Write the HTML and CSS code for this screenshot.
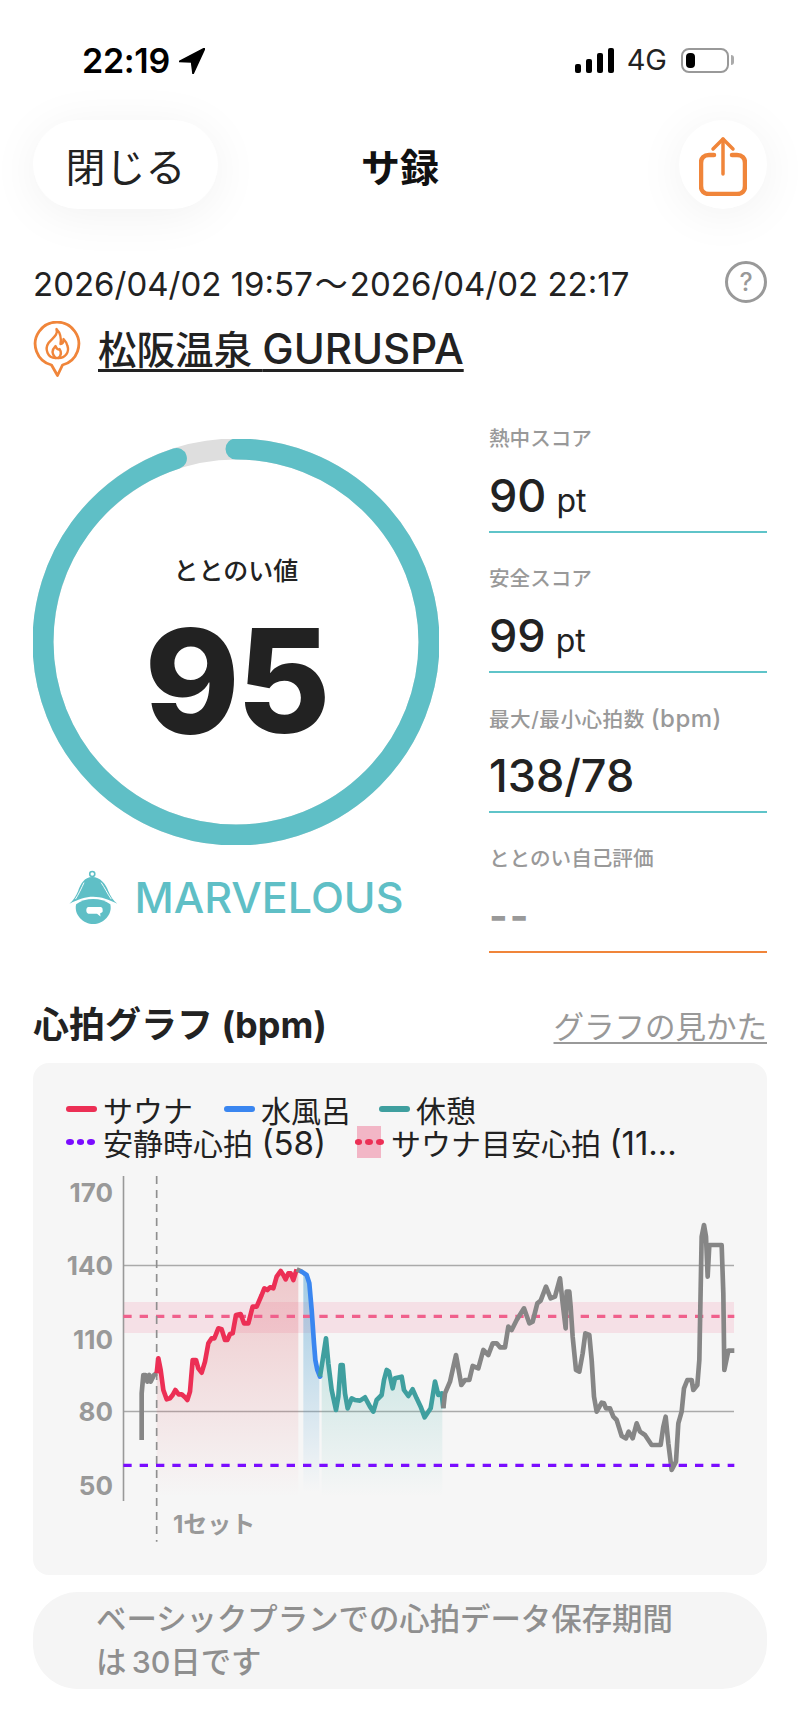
FILE: index.html
```html
<!DOCTYPE html>
<html lang="ja">
<head>
<meta charset="utf-8">
<title>サ録</title>
<link rel="stylesheet" href="styles.css">
</head>
<body>
<div class="status">
  <div class="status-left">
    <span class="clock">22:19</span>
    <svg class="loc" viewBox="0 0 26 26"><path d="M26 0 L0 13.5 L12.5 14 L14 26 Z" fill="#000" stroke="#000" stroke-width="1.5" stroke-linejoin="round"/></svg>
  </div>
  <div class="status-right">
    <div class="signal"><i class="b1"></i><i class="b2"></i><i class="b3"></i><i class="b4"></i></div>
    <span class="net">4G</span>
    <div class="battery"><i></i></div>
    <div class="nub"></div>
  </div>
</div>

<header class="nav">
  <button class="close">閉じる</button>
  <h1 class="title">サ録</h1>
  <button class="share">
    <svg viewBox="0 0 48 62" width="48" height="62" fill="none" stroke="#f0853a" stroke-width="3.5" stroke-linecap="round" stroke-linejoin="round">
      <path d="M15 21 H10 C5 21 2 24 2 29 V52 C2 57 5 60 10 60 H38 C43 60 46 57 46 52 V29 C46 24 43 21 38 21 H33" stroke-width="4.5"/>
      <path d="M24 5 V40"/>
      <path d="M14 15 L24 5 L34 15"/>
    </svg>
  </button>
</header>

<div class="date-row">
  <span class="date">2026/04/02 19:57<span class="wave">～</span>2026/04/02 22:17</span>
  <span class="help">?</span>
</div>

<div class="store-row">
  <svg class="pin" viewBox="0 0 47 56" fill="none" stroke="#f0853a" stroke-width="2.8" stroke-linejoin="round" stroke-linecap="round">
    <path d="M18 44 A21.8 21.8 0 1 1 29 44 L24 54.5 Z"/>
    <path d="M23 8 C25 14 19 17 15 22 C11 28 14 37 22 37 H25 C32 37 36 31 34 25 C33 21 31 19 30 18 C30 21 29 23 27 23 C28 17 27 12 23 8Z" stroke-width="2.4"/>
    <path d="M22 37 C18 33 18 29 22 25 C23 28 25 29 26 28 C28 31 28 34 25 37" stroke-width="2.4"/>
  </svg>
  <span class="store">松阪温泉 <span class="store-latin">GURUSPA</span></span>
</div>

<section class="summary">
  <div class="score">
    <div class="ring">
      <svg viewBox="0 0 406 406" width="406" height="406" class="ring-svg">
        <circle cx="203" cy="203" r="193" fill="none" stroke="#dedede" stroke-width="21"/>
        <circle cx="203" cy="203" r="193" fill="none" stroke="#5fbfc6" stroke-width="21" stroke-linecap="round" pathLength="100" stroke-dasharray="95 100" transform="rotate(-90 203 203)"/>
      </svg>
      <div class="ring-text">
        <div class="ring-label">ととのい値</div>
        <div class="ring-value">95</div>
      </div>
    </div>
    <div class="rank">
      <svg class="hat" viewBox="55 25 155 180">
        <circle cx="127" cy="41" r="8" fill="none" stroke="#5fbfc6" stroke-width="5"/>
        <path d="M127 50 C102 50 90 72 82 95 C76 110 66 125 55 135 C85 120 105 113 130 113 C155 113 180 122 206 135 C194 125 184 110 178 95 C170 72 152 50 127 50Z" fill="#5fbfc6"/>
        <path d="M76 136 C90 126 110 120 130 120 C150 120 170 126 184 136 C192 170 160 199 130 199 C100 199 68 170 76 136Z" fill="#5fbfc6"/>
        <path d="M101 68 C93 85 84 105 74 120 M155 68 C167 85 174 102 187 120" fill="none" stroke="#fff" stroke-width="3"/>
        <path d="M115 145 H152 C160 145 160 152 160 158 C160 163 155 164 152 165 L153 175 L142 166 H115 C106 166 106 145 115 145Z" fill="#fff"/>
      </svg>
      <span class="rank-name">MARVELOUS</span>
    </div>
  </div>
  <div class="stats">
    <div class="stat"><div class="stat-label">熱中スコア</div><div class="stat-value">90<small>pt</small></div></div>
    <div class="stat"><div class="stat-label">安全スコア</div><div class="stat-value">99<small>pt</small></div></div>
    <div class="stat"><div class="stat-label stat-label-wide">最大/最小心拍数 <span class="stat-unit">(bpm)</span></div><div class="stat-value">138/78</div></div>
    <div class="stat stat-empty"><div class="stat-label">ととのい自己評価</div><div class="stat-value">--</div></div>
  </div>
</section>

<div class="section-head">
  <h2 class="section-title">心拍グラフ (bpm)</h2>
  <span class="section-link">グラフの見かた</span>
</div>

<section class="card">
  <div class="legend">
    <div class="legend-row">
      <span class="item"><i class="swatch red"></i><span>サウナ</span></span>
      <span class="item item-tight"><i class="swatch blue"></i><span>水風呂</span></span>
      <span class="item"><i class="swatch teal"></i><span>休憩</span></span>
    </div>
    <div class="legend-row">
      <span class="item"><i class="dots purple"><b></b><b></b><b></b></i><span>安静時心拍 <span class="legend-latin">(58)</span></span></span>
      <span class="item"><i class="band"><i class="dots pink"><b></b><b></b><b></b></i></i><span>サウナ目安心拍 <span class="legend-latin">(11...</span></span></span>
    </div>
  </div>
  <svg class="chart" viewBox="33 1170 734 380" width="734" height="380">
    <defs>
      <linearGradient id="fr" x1="0" y1="0" x2="0" y2="1"><stop offset="0" stop-color="#dc5a64" stop-opacity=".3"/><stop offset="1" stop-color="#dc5a64" stop-opacity="0"/></linearGradient>
      <linearGradient id="fb" x1="0" y1="0" x2="0" y2="1"><stop offset="0" stop-color="#4d9fd0" stop-opacity=".5"/><stop offset="1" stop-color="#4d9fd0" stop-opacity="0"/></linearGradient>
      <linearGradient id="ft" x1="0" y1="0" x2="0" y2="1"><stop offset="0" stop-color="#4fb5ad" stop-opacity=".28"/><stop offset="1" stop-color="#4fb5ad" stop-opacity="0"/></linearGradient>
    </defs>
    <rect x="124" y="1302" width="610" height="31" fill="#ef5f8a" fill-opacity=".14"/>
    <path d="M124 1265.5 H734 M124 1411.5 H734" stroke="#aaa" stroke-width="1.6"/>
    <path d="M123.5 1176 V1501" stroke="#999" stroke-width="1.6"/>
    <g class="axis">
      <text x="113" y="1202">170</text>
      <text x="113" y="1275">140</text>
      <text x="113" y="1349">110</text>
      <text x="113" y="1421">80</text>
      <text x="113" y="1495">50</text>
    </g>
    <g transform="translate(30 1060) scale(.33333)" fill="none" stroke-linejoin="round">
      <path d="M380 940 L385 895 L392 930 L400 990 L410 1018 L420 1015 L428 1005 L436 990 L446 1003 L455 1003 L465 1012 L472 1020 L480 995 L488 900 L498 900 L505 925 L515 938 L525 905 L535 850 L545 835 L553 835 L565 805 L575 808 L585 840 L592 840 L600 822 L608 820 L618 765 L632 762 L642 790 L655 790 L668 740 L680 740 L695 705 L703 685 L712 690 L720 682 L730 685 L740 650 L752 633 L760 645 L767 658 L775 640 L782 640 L790 660 L800 628 L805 630 V1310 H380Z" fill="url(#fr)"/>
      <path d="M820 640 L830 645 L838 670 L845 750 L852 850 L856 900 L862 930 L868 950 V1295 H820Z" fill="url(#fb)"/>
      <path d="M875 925 L888 835 L895 910 L905 990 L918 1050 L925 1010 L932 915 L938 915 L945 1000 L953 1045 L965 1015 L975 1020 L990 1022 L1005 1012 L1020 1040 L1030 1055 L1040 1020 L1055 1005 L1062 960 L1070 930 L1077 935 L1088 985 L1095 955 L1115 950 L1122 990 L1135 1008 L1148 988 L1160 1015 L1172 1040 L1184 1072 L1202 1045 L1215 965 L1225 1005 L1237 1000 V1310 H875Z" fill="url(#ft)"/>

      <path d="M280 769 H2113" stroke="#f0608c" stroke-width="10" stroke-dasharray="25 24"/>
      <path d="M380 348 V1445" stroke="#8f8f8f" stroke-width="5" stroke-dasharray="24 18"/>

      <path d="M335 1140 L335 1000 L340 945 L347 945 L352 965 L358 945 L362 965 L372 945 L380 940" stroke="#868686" stroke-width="14"/>
      <path d="M380 940 L385 895 L392 930 L400 990 L410 1018 L420 1015 L428 1005 L436 990 L446 1003 L455 1003 L465 1012 L472 1020 L480 995 L488 900 L498 900 L505 925 L515 938 L525 905 L535 850 L545 835 L553 835 L565 805 L575 808 L585 840 L592 840 L600 822 L608 820 L618 765 L632 762 L642 790 L655 790 L668 740 L680 740 L695 705 L703 685 L712 690 L720 682 L730 685 L740 650 L752 633 L760 645 L767 658 L775 640 L782 640 L790 660 L800 628" stroke="#ec2f55" stroke-width="14"/>
      <path d="M800 628 L815 635" stroke="#868686" stroke-width="14"/>
      <path d="M815 635 L830 645 L838 670 L845 750 L852 850 L856 900 L862 930 L870 950" stroke="#3a86f0" stroke-width="14" stroke-linecap="round"/>
      <path d="M870 950 L878 900 L888 835 L895 910 L905 990 L918 1050 L925 1010 L932 915 L938 915 L945 1000 L953 1045 L965 1015 L975 1020 L990 1022 L1005 1012 L1020 1040 L1030 1055 L1040 1020 L1055 1005 L1062 960 L1070 930 L1077 935 L1088 985 L1095 955 L1115 950 L1122 990 L1135 1008 L1148 988 L1160 1015 L1172 1040 L1184 1072 L1202 1045 L1215 965 L1225 1005 L1235 1000 L1240 1045" stroke="#3f9f9f" stroke-width="14"/>
      <g transform="translate(1110 0)">
        <path d="M130 1045 L135 1000 L150 965 L168 885 L184 975 L195 960 L208 960 L218 918 L235 925 L250 870 L265 885 L278 850 L290 850 L300 862 L315 862 L325 800 L335 810 L350 780 L372 745 L388 790 L398 785 L412 730 L422 722 L438 680 L452 715 L465 710 L480 655 L488 730 L497 805 L500 695 L508 695 L512 740 L518 830 L528 930 L538 935 L548 880 L556 820 L568 825 L575 900 L582 1010 L590 1055 L605 1028 L612 1030 L618 1045 L630 1045 L640 1070 L650 1080 L665 1128 L678 1135 L686 1115 L698 1135 L710 1090 L720 1115 L735 1125 L755 1155 L770 1155 L782 1155 L790 1100 L797 1070 L805 1150 L815 1230 L828 1205 L835 1090 L845 1055 L852 985 L862 960 L875 960 L880 990 L892 975 L898 900 L905 530 L912 495 L918 530 L923 650 L928 555 L965 555 L970 700 L973 930 L985 872 L1003 872" stroke="#868686" stroke-width="14"/>
      </g>
      <path d="M280 1216 H2113" stroke="#7a0cff" stroke-width="10" stroke-dasharray="25 24"/>
    </g>
    <text class="set" x="173" y="1533">1セット</text>
  </svg>
</section>

<div class="note">ベーシックプランでの心拍データ保存期間は&#8201;30日です</div>
</body>
</html>
```
FILE: styles.css
```css
* { box-sizing: border-box; }
html, body { margin: 0; padding: 0; }
body {
  width: 800px;
  height: 1734px;
  background: #fff;
  color: #222;
  font-family: Inter, "Noto Sans CJK JP", sans-serif;
  overflow: hidden;
}
.status {
  height: 120px;
  padding: 47px 66px 0 82px;
  display: flex;
  justify-content: space-between;
  align-items: flex-start;
}
.status-left { display: flex; align-items: center; height: 27px; gap: 9px; }
.clock { font-size: 34px; font-weight: 600; color: #000; letter-spacing: -.3px; line-height: 27px; }
.loc { width: 26px; height: 26px; }
.status-right { display: flex; align-items: center; height: 26px; }
.signal { display: flex; align-items: flex-end; gap: 5px; height: 25px; width: 39px; }
.signal i { display: block; width: 6px; background: #000; border-radius: 2px; }
.b1 { height: 9px; } .b2 { height: 14px; } .b3 { height: 20px; } .b4 { height: 25px; }
.net { font-size: 29px; margin-left: 13px; color: #222; line-height: 26px; }
.battery { margin-left: 14px; width: 48px; height: 25px; border: 2px solid #999; border-radius: 8px; padding: 3px; }
.battery i { display: block; width: 9px; height: 15px; background: #000; border-radius: 4px; }
.nub { width: 3px; height: 10px; margin-left: 2px; background: #aaa; border-radius: 0 3px 3px 0; }

.nav {
  height: 89px;
  margin: 0 33px;
  display: grid;
  grid-template-columns: 1fr auto 1fr;
  align-items: center;
}
.close, .share {
  border: 0;
  background: #fff;
  height: 89px;
  box-shadow: 0 6px 50px rgba(0,0,0,.06);
  color: #222;
  font-family: inherit;
  padding: 0;
}
.close { width: 185px; border-radius: 45px; font-size: 40px; }
.share { width: 88px; border-radius: 50%; display: flex; align-items: center; justify-content: center; justify-self: end; }
.title { margin: 0; font-size: 39px; font-weight: 700; color: #111; }

.date-row {
  margin: 53px 33px 0 33px;
  height: 40px;
  display: flex;
  align-items: center;
  justify-content: space-between;
}
.date { font-size: 33px; white-space: nowrap; }
.wave { margin: 0 2px; }
.help {
  width: 42px; height: 42px;
  border: 3px solid #999;
  border-radius: 50%;
  color: #999;
  font-size: 25px;
  font-weight: 500;
  display: flex; align-items: center; justify-content: center;
}
.store-row { margin: 19px 33px 0; height: 56px; display: flex; align-items: flex-start; gap: 17px; }
.pin { width: 48px; height: 56px; flex: none; }
.store {
  font-size: 38.5px;
  font-weight: 500;
  line-height: 56px;
  text-decoration: underline;
  text-decoration-thickness: 3px;
  text-underline-offset: 5px;
  white-space: nowrap;
}
.store-latin { font-size: 42px; }

.summary { margin: 47px 33px 0; display: flex; justify-content: space-between; height: 530px; }
.score { width: 406px; padding-top: 15px; }
.ring { display: grid; width: 406px; height: 406px; }
.ring-svg, .ring-text { grid-area: 1 / 1; }
.ring-text { display: flex; flex-direction: column; align-items: center; padding-top: 114px; }
.ring-label { font-size: 25px; font-weight: 500; line-height: 36px; }
.ring-value { font-size: 144px; font-weight: 800; line-height: 150px; margin-top: 17px; letter-spacing: -3px; }
.rank { margin-top: 24px; display: flex; align-items: center; justify-content: center; gap: 16px; }
.hat { width: 50px; height: 57px; }
.rank-name { font-size: 43px; font-weight: 500; color: #5fbfc6; line-height: 57px; }

.stats { width: 278px; display: flex; flex-direction: column; gap: 31px; }
.stat { height: 109px; border-bottom: 2px solid #5fc4c9; }
.stat-label { height: 30px; line-height: 30px; font-size: 20.6px; font-weight: 500; color: #999; white-space: nowrap; }
.stat-label-wide { letter-spacing: .5px; }
.stat-unit { font-size: 24px; }
.stat-value { margin-top: 13px; height: 58px; line-height: 58px; font-size: 45px; font-weight: 500; color: #222; white-space: nowrap; }
.stat-value small { font-size: 32px; font-weight: 400; margin-left: 10px; }
.stat-empty { border-bottom-color: #f0853a; }
.stat-empty .stat-value { color: #999; font-weight: 700; font-size: 40px; letter-spacing: 2px; }

.section-head {
  margin: 0 33px;
  height: 44px;
  display: flex;
  align-items: center;
  justify-content: space-between;
  margin-top: 49px;
}
.section-title { margin: 0; font-size: 36px; font-weight: 700; line-height: 44px; }
.section-link { font-size: 30.5px; color: #999; text-decoration: underline; text-decoration-thickness: 2px; text-underline-offset: 4px; }

.card {
  margin: 16px 33px 0;
  height: 512px;
  background: #f6f6f6;
  border-radius: 16px;
  padding-top: 29px;
}
.legend { padding-left: 33px; font-size: 30px; height: 78px; color: #222; }
.legend-row { display: flex; height: 33px; align-items: center; white-space: nowrap; }
.legend-latin { font-size: 33px; }
.item { display: flex; align-items: center; margin-right: 31px; }
.item-tight { margin-right: 28px; }
.swatch { display: block; width: 31px; height: 6px; border-radius: 3px; margin-right: 6px; }
.red { background: #ec2f55; } .blue { background: #3a86f0; } .teal { background: #3f9f9f; }
.dots { display: flex; gap: 3px; width: 29px; margin-right: 8px; }
.dots b { display: block; width: 8px; height: 6px; border-radius: 50%; }
.purple b { background: #7a0cff; }
.pink b { background: #ec2f55; }
.band {
  display: flex; align-items: center; justify-content: center;
  width: 24px; height: 32px;
  background: #f2b6c6;
  margin-right: 10px;
}
.band .dots { margin: 0 -3px; flex: none; }
.chart { display: block; }
.axis text { font-size: 26px; font-weight: 700; fill: #999; text-anchor: end; }
.set { font-size: 24px; font-weight: 700; fill: #999; }

.note {
  margin: 17px 33px 0;
  height: 97px;
  border-radius: 45px;
  background: #f5f5f5;
  color: #8f8f8f;
  font-size: 30.4px;
  font-weight: 500;
  line-height: 43px;
  padding: 6px 80px 0 63px;
}
```
